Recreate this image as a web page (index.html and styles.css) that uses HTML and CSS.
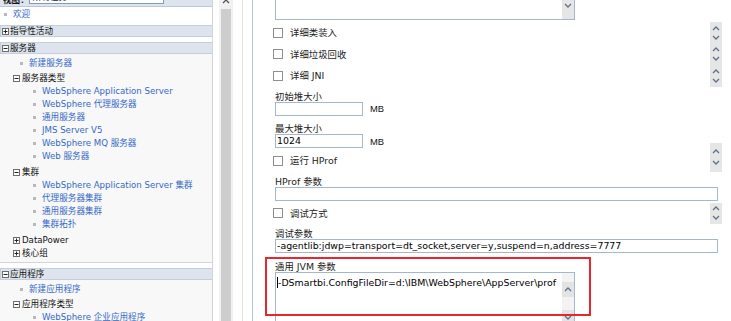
FILE: index.html
```html
<!DOCTYPE html>
<html>
<head>
	<meta charset="utf-8">
	<title>Java 虚拟机</title>
	<link rel="stylesheet" href="styles.css">
</head>
<body>
<div class="page">
	<div class="nav">
		<div class="view-bar">
			<span class="view-label">视图：</span>
			<span class="view-select">所有任务</span>
		</div>
		<ul class="tree welcome">
			<li class="leaf"><a href="#">欢迎</a></li>
		</ul>

		<div class="section">
			<div class="section-head">
				<svg class="tog" width="7" height="7" viewBox="0 0 7 7"><rect x=".5" y=".5" width="6" height="6" fill="#fff" stroke="#6d6d6d"/><path d="M1.5 3.5h4M3.5 1.5v4" stroke="#222"/></svg>
				<span>指导性活动</span>
			</div>
		</div>

		<div class="section">
			<div class="section-head">
				<svg class="tog" width="7" height="7" viewBox="0 0 7 7"><rect x=".5" y=".5" width="6" height="6" fill="#fff" stroke="#6d6d6d"/><path d="M1.5 3.5h4" stroke="#222"/></svg>
				<span>服务器</span>
			</div>
			<div class="section-body">
				<ul class="tree">
					<li class="leaf"><a href="#">新建服务器</a></li>
					<li class="group">
						<div class="group-head">
							<svg class="tog" width="7" height="7" viewBox="0 0 7 7"><rect x=".5" y=".5" width="6" height="6" fill="#fff" stroke="#6d6d6d"/><path d="M1.5 3.5h4" stroke="#222"/></svg>
							<span>服务器类型</span>
						</div>
						<ul class="tree sub">
							<li class="leaf"><a href="#">WebSphere Application Server</a></li>
							<li class="leaf"><a href="#">WebSphere 代理服务器</a></li>
							<li class="leaf"><a href="#">通用服务器</a></li>
							<li class="leaf"><a href="#">JMS Server V5</a></li>
							<li class="leaf"><a href="#">WebSphere MQ 服务器</a></li>
							<li class="leaf"><a href="#">Web 服务器</a></li>
						</ul>
					</li>
					<li class="group">
						<div class="group-head">
							<svg class="tog" width="7" height="7" viewBox="0 0 7 7"><rect x=".5" y=".5" width="6" height="6" fill="#fff" stroke="#6d6d6d"/><path d="M1.5 3.5h4" stroke="#222"/></svg>
							<span>集群</span>
						</div>
						<ul class="tree sub">
							<li class="leaf"><a href="#">WebSphere Application Server 集群</a></li>
							<li class="leaf"><a href="#">代理服务器集群</a></li>
							<li class="leaf"><a href="#">通用服务器集群</a></li>
							<li class="leaf"><a href="#">集群拓扑</a></li>
						</ul>
					</li>
					<li class="group closed">
						<div class="group-head">
							<svg class="tog" width="7" height="7" viewBox="0 0 7 7"><rect x=".5" y=".5" width="6" height="6" fill="#fff" stroke="#6d6d6d"/><path d="M1.5 3.5h4M3.5 1.5v4" stroke="#222"/></svg>
							<span>DataPower</span>
						</div>
					</li>
					<li class="group closed">
						<div class="group-head">
							<svg class="tog" width="7" height="7" viewBox="0 0 7 7"><rect x=".5" y=".5" width="6" height="6" fill="#fff" stroke="#6d6d6d"/><path d="M1.5 3.5h4M3.5 1.5v4" stroke="#222"/></svg>
							<span>核心组</span>
						</div>
					</li>
				</ul>
			</div>
		</div>

		<div class="section">
			<div class="section-head">
				<svg class="tog" width="7" height="7" viewBox="0 0 7 7"><rect x=".5" y=".5" width="6" height="6" fill="#fff" stroke="#6d6d6d"/><path d="M1.5 3.5h4" stroke="#222"/></svg>
				<span>应用程序</span>
			</div>
			<div class="section-body">
				<ul class="tree">
					<li class="leaf"><a href="#">新建应用程序</a></li>
					<li class="group">
						<div class="group-head">
							<svg class="tog" width="7" height="7" viewBox="0 0 7 7"><rect x=".5" y=".5" width="6" height="6" fill="#fff" stroke="#6d6d6d"/><path d="M1.5 3.5h4" stroke="#222"/></svg>
							<span>应用程序类型</span>
						</div>
						<ul class="tree sub">
							<li class="leaf"><a href="#">WebSphere 企业应用程序</a></li>
							<li class="leaf"><a href="#">业务级应用程序</a></li>
						</ul>
					</li>
				</ul>
			</div>
		</div>
	</div>

	<div class="frame-gap">
		<div class="scrollbar">
			<svg class="scroll-up" width="8" height="8" viewBox="0 0 8 8"><path d="M1 4l3-3 3 3" fill="none" stroke="#555" stroke-width="1.3"/></svg>
			<div class="thumb"></div>
		</div>
		<div class="divider"></div>
	</div>

	<div class="main">
		<div class="ta ta-top">
			<div class="ta-text"></div>
			<div class="ta-bar">
				<svg width="8" height="5" viewBox="0 0 8 5"><path d="M1 1l3 3 3-3" fill="none" stroke="#5f7189" stroke-width="1.3"/></svg>
			</div>
		</div>

		<div class="check-row">
			<span class="check"></span><span>详细类装入</span>
			<span class="spin">
				<svg width="8" height="5" viewBox="0 0 8 5"><path d="M1 4l3-3 3 3" fill="none" stroke="#5f7189" stroke-width="1.3"/></svg>
				<svg width="8" height="5" viewBox="0 0 8 5"><path d="M1 1l3 3 3-3" fill="none" stroke="#5f7189" stroke-width="1.3"/></svg>
			</span>
		</div>
		<div class="check-row">
			<span class="check"></span><span>详细垃圾回收</span>
			<span class="spin">
				<svg width="8" height="5" viewBox="0 0 8 5"><path d="M1 4l3-3 3 3" fill="none" stroke="#5f7189" stroke-width="1.3"/></svg>
				<svg width="8" height="5" viewBox="0 0 8 5"><path d="M1 1l3 3 3-3" fill="none" stroke="#5f7189" stroke-width="1.3"/></svg>
			</span>
		</div>
		<div class="check-row">
			<span class="check"></span><span>详细 JNI</span>
			<span class="spin">
				<svg width="8" height="5" viewBox="0 0 8 5"><path d="M1 4l3-3 3 3" fill="none" stroke="#5f7189" stroke-width="1.3"/></svg>
				<svg width="8" height="5" viewBox="0 0 8 5"><path d="M1 1l3 3 3-3" fill="none" stroke="#5f7189" stroke-width="1.3"/></svg>
			</span>
		</div>

		<div class="field">
			<label class="field-label">初始堆大小</label>
			<div class="field-row">
				<span class="input short"></span>
				<span class="unit">MB</span>
			</div>
		</div>
		<div class="field">
			<label class="field-label">最大堆大小</label>
			<div class="field-row">
				<span class="input short">1024</span>
				<span class="unit">MB</span>
			</div>
		</div>

		<div class="check-row">
			<span class="check"></span><span>运行 HProf</span>
			<span class="spin tall">
				<svg width="8" height="5" viewBox="0 0 8 5"><path d="M1 4l3-3 3 3" fill="none" stroke="#5f7189" stroke-width="1.3"/></svg>
				<svg width="8" height="5" viewBox="0 0 8 5"><path d="M1 1l3 3 3-3" fill="none" stroke="#5f7189" stroke-width="1.3"/></svg>
			</span>
		</div>
		<div class="field">
			<label class="field-label">HProf 参数</label>
			<div class="field-row">
				<span class="input wide"></span>
			</div>
		</div>

		<div class="check-row">
			<span class="check"></span><span>调试方式</span>
			<span class="spin">
				<svg width="8" height="5" viewBox="0 0 8 5"><path d="M1 4l3-3 3 3" fill="none" stroke="#5f7189" stroke-width="1.3"/></svg>
				<svg width="8" height="5" viewBox="0 0 8 5"><path d="M1 1l3 3 3-3" fill="none" stroke="#5f7189" stroke-width="1.3"/></svg>
			</span>
		</div>
		<div class="field">
			<label class="field-label">调试参数</label>
			<div class="field-row">
				<span class="input wide">-agentlib:jdwp=transport=dt_socket,server=y,suspend=n,address=7777</span>
			</div>
		</div>
		<div class="field highlight">
			<label class="field-label">通用 JVM 参数</label>
			<div class="ta ta-jvm">
				<div class="ta-text"><span class="caret"></span>-DSmartbi.ConfigFileDir=d:\IBM\WebSphere\AppServer\prof</div>
				<div class="ta-bar">
					<span class="ta-btn"><svg width="8" height="5" viewBox="0 0 8 5"><path d="M1 4l3-3 3 3" fill="none" stroke="#5f7189" stroke-width="1.3"/></svg></span>
					<span class="ta-btn low"><svg width="8" height="5" viewBox="0 0 8 5"><path d="M1 1l3 3 3-3" fill="none" stroke="#5f7189" stroke-width="1.3"/></svg></span>
				</div>
			</div>
		</div>
	</div>
</div>
</body>
</html>
```

FILE: styles.css
```css
* {
	box-sizing: border-box;
}

html, body {
	margin: 0;
	height: 321px;
	overflow: hidden;
	background: #fff;
}

body {
	font-family: "DejaVu Sans", "Noto Sans CJK SC", sans-serif;
	color: #222;
}

.page {
	display: flex;
	height: 321px;
	overflow: hidden;
}

/* left navigation frame */
.nav {
	width: 213px;
	flex: none;
	border-right: 1px solid #d3d3d3;
	font-size: 8.6px;
	line-height: 13px;
}

.view-bar {
	height: 7px;
	overflow: hidden;
	display: flex;
	align-items: flex-end;
	padding-left: 3px;
	background: #dde4ed;
	border-bottom: 1px solid #bcc8d6;
}

.view-label {
	font-weight: bold;
	line-height: 11px;
	color: #111;
}

.view-select {
	width: 135px;
	height: 14px;
	margin-bottom: 2px;
	padding-left: 3px;
	line-height: 12px;
	background: #fff;
	border: 1px solid #7f9db9;
}

.tree {
	list-style: none;
	margin: 0;
	padding: 0 0 0 20px;
}

.tree.sub {
	padding-left: 13px;
	margin-bottom: 3px;
}

.tree.welcome {
	padding-left: 4px;
	margin-top: 1px;
}

.leaf {
	white-space: nowrap;
}

.leaf::before {
	content: "";
	display: inline-block;
	width: 3px;
	height: 3px;
	margin-right: 6px;
	background: #b8b8b8;
	vertical-align: middle;
}

.leaf a {
	color: #3468c8;
	text-decoration: none;
}

.group-head {
	display: flex;
	align-items: center;
	gap: 2px;
	margin: 2px 0 0 -7px;
	color: #111;
}

.group.closed > .group-head {
	margin-top: 0;
}

.tog {
	flex: none;
	display: block;
}

.section {
	margin-top: 4px;
}

.section + .section {
	margin-top: 5px;
}

.section-head {
	display: flex;
	align-items: center;
	gap: 1px;
	padding-left: 1px;
	line-height: 10px;
	color: #111;
	background: #dde4ed;
	border: 1px solid #c5cedb;
	border-right: none;
}

.section-body {
	padding: 3px 0 2px;
	background: #f8f8f8;
	border-bottom: 1px solid #d5d5d5;
}

/* gap between frames */
.frame-gap {
	width: 39px;
	flex: none;
	display: flex;
}

.scrollbar {
	width: 14px;
	margin-left: 6px;
	display: flex;
	flex-direction: column;
	align-items: center;
	background: #f1f1f1;
}

.scroll-up {
	display: block;
	margin-top: -1px;
}

.thumb {
	flex: 1;
	width: 10px;
	margin-top: 2px;
	background: #cdcdcd;
}

.divider {
	width: 1px;
	margin-left: 9px;
	background: #e2e2e2;
}

/* right content frame */
.main {
	flex: 1;
	min-width: 0;
	padding: 0 9px 0 22px;
	border-left: 1px solid #b3c7e0;
	font-size: 9.4px;
	line-height: 11px;
}

.ta {
	width: 300px;
	display: flex;
	background: #fff;
	border: 1px solid #a4b7cc;
}

.ta-top {
	height: 50px;
	margin-top: -30px;
}

.ta-jvm {
	height: 58px;
}

.ta-text {
	flex: 1;
	min-width: 0;
	padding: 3px 1px;
	line-height: 13px;
	color: #000;
	white-space: nowrap;
	overflow: hidden;
}

.caret {
	display: inline-block;
	width: 1px;
	height: 11px;
	background: #000;
	vertical-align: -2px;
}

.ta-bar {
	width: 12px;
	flex: none;
	display: flex;
	flex-direction: column;
	align-items: center;
	background: #f3f3f3;
}

.ta-bar svg {
	display: block;
}

.ta-top .ta-bar {
	justify-content: flex-end;
	padding-bottom: 11px;
	background: #e6e6e6;
}

.ta-btn {
	width: 12px;
	height: 15px;
	margin-top: 9px;
	display: flex;
	align-items: center;
	justify-content: center;
	background: #e3e3e3;
}

.ta-btn.low {
	margin-top: 13px;
}

.check-row {
	display: flex;
	align-items: center;
	height: 21.5px;
	margin-top: 2px;
	white-space: nowrap;
}

.check-row + .check-row {
	margin-top: 0;
}

.check {
	width: 10px;
	height: 10px;
	margin: 0 7px 0 -2px;
	flex: none;
	background: #fff;
	border: 1px solid #8e8e8e;
}

.spin {
	width: 12px;
	margin-left: auto;
	align-self: stretch;
	display: flex;
	flex-direction: column;
	align-items: center;
	justify-content: space-evenly;
	background: #e6e6e6;
}

.spin svg {
	display: block;
}

.spin.tall {
	margin-top: -7px;
}

.field {
	margin-top: 4px;
}

.field + .field {
	margin-top: 7.5px;
}

.field-label {
	display: block;
	white-space: nowrap;
}

.field-row {
	display: flex;
	align-items: center;
	gap: 7px;
}

.input {
	height: 14px;
	padding: 0 1px;
	line-height: 12px;
	color: #000;
	white-space: nowrap;
	overflow: hidden;
	background: #fff;
	border: 1px solid #a4b7cc;
}

.input.short {
	width: 88px;
}

.input.wide {
	width: 443px;
}

.unit {
	font-family: "Liberation Sans", Arial, sans-serif;
	color: #111;
}

/* red marker drawn over the generic JVM arguments field */
.field.highlight {
	position: relative;
}

.field.highlight::after {
	content: "";
	position: absolute;
	left: -10px;
	top: -3.5px;
	width: 322px;
	height: 55px;
	border: 2px solid #e8262b;
	pointer-events: none;
}
```
